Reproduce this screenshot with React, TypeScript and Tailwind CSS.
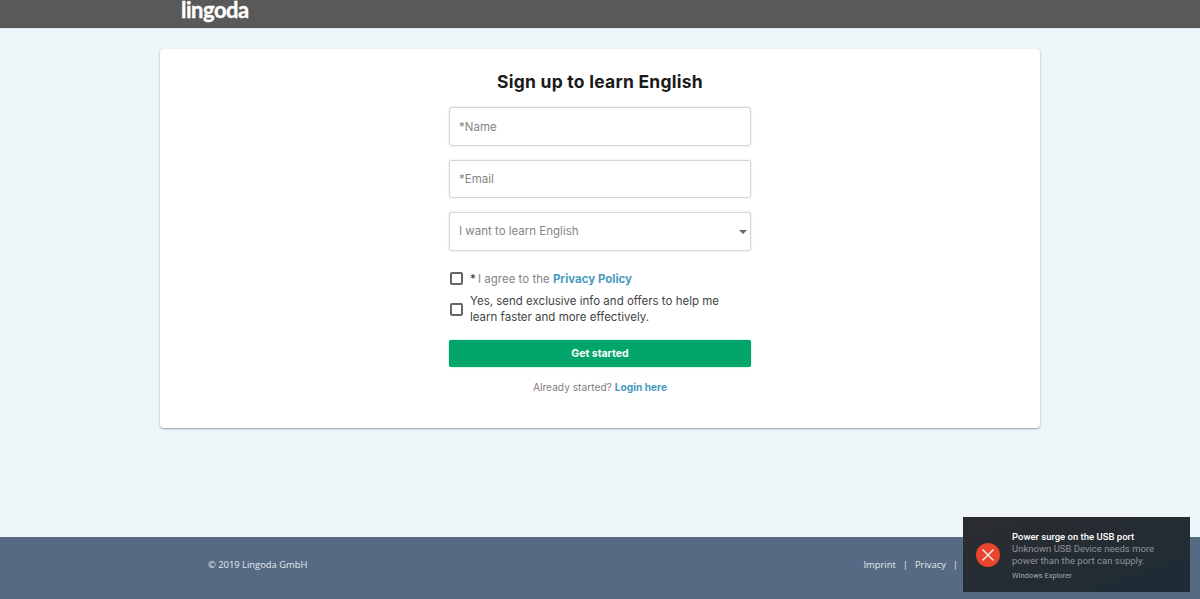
const sans = "font-['Inter','Liberation_Sans',sans-serif]";

const Field = ({ label, height }: { label: string; height: string }) => (
  <div className={`${height} w-full flex items-center px-[9px] bg-white border border-[#d3d6d8] rounded-[3px] shadow-[0_0_2px_#d8dadb] text-[11.5px] text-[#858585]`}>
    {label}
  </div>
);

const App = () => {
  return (
    <div className={`${sans} relative h-[599px] w-full overflow-hidden flex flex-col bg-[#eef6f9]`}>
      {/* Header */}
      <header className="h-[29px] shrink-0 bg-[#595959] border-b border-[#e2e6e8] pl-[181px]">
        <svg viewBox="0 0 72 28" className="w-[72px] h-[28px]">
          <text x="0" y="18" fill="#fff" stroke="#fff" strokeWidth="0.35" fontFamily="Lato, sans-serif" fontWeight="700" fontSize="22" letterSpacing="-0.5">lingoda</text>
        </svg>
      </header>

      {/* Card */}
      <main className="flex-1 flex justify-center pt-[20px]">
        <div className="w-[880px] h-[379px] bg-white rounded-[4px] shadow-[0_1px_2px_rgba(90,100,110,0.6)] flex flex-col items-center pt-[20px]">
          <h1 className="text-[17.5px] leading-[26px] font-bold text-[#1a1a1a] tracking-[0.25px]">Sign up to learn English</h1>
          <div className="w-[302px] mt-[12px] flex flex-col">
            <div className="flex flex-col gap-[14px]">
              <Field label="*Name" height="h-[39px] pt-[2px]" />
              <Field label="*Email" height="h-[38px] pt-[1px]" />
              <div className="relative">
                <Field label="I want to learn English" height="h-[39px]" />
                <svg viewBox="0 0 8 4" className="absolute right-[4px] top-[18px] w-[8px] h-[4px]">
                  <polygon points="0,0 8,0 4,4" fill="#666" />
                </svg>
              </div>
            </div>

            {/* Checkboxes */}
            <div className="mt-[20px] flex items-center gap-[7px] h-[16px] pl-px">
              <span className="w-[13px] h-[13px] shrink-0 border-2 border-[#666] rounded-[2px] -mt-[1px]" />
              <p className="text-[11.5px] text-[#858585] pt-[1px]">
                <span className="text-[#333] mr-[-1px]">*</span> I agree to the{" "}
                <a className="font-bold text-[#4a9ac0]">Privacy Policy</a>
              </p>
            </div>
            <div className="mt-[6px] flex items-center gap-[7px] pl-px">
              <span className="w-[13px] h-[13px] shrink-0 border-2 border-[#666] rounded-[2px]" />
              <p className="text-[11.5px] leading-[16px] text-[#444]">
                Yes, send exclusive info and offers to help me
                <br />
                learn faster and more effectively.
              </p>
            </div>

            <button className="mt-[15px] h-[27px] w-full rounded-[2px] bg-[#02a56a] shadow-[0_0_2px_#7fe0bd] text-white text-[10.5px] font-bold pt-[1px]">
              Get started
            </button>
            <p className="mt-[13px] text-center text-[10.2px] text-[#808080]">
              Already started? <a className="font-bold text-[#4a9ac0]">Login here</a>
            </p>
          </div>
        </div>
      </main>

      {/* Footer */}
      <footer className="h-[62px] shrink-0 bg-[#566b83] flex items-center justify-between pl-[208px] pr-[242px] pb-[6px] font-['Open_Sans',sans-serif] text-[9.4px] text-[#e4e9ee]">
        <span>© 2019 Lingoda GmbH</span>
        <div className="flex gap-[7px]">
          <span>Imprint</span>
          <span>|</span>
          <span>Privacy</span>
          <span>|</span>
        </div>
      </footer>

      {/* Windows toast */}
      <div className="absolute left-[963px] top-[517px] w-[227px] h-[75px] bg-gradient-to-br from-[#2b2c30] to-[#1d2c36] flex items-center pl-[13px] font-['Roboto',sans-serif]">
        <svg viewBox="0 0 24 24" className="w-[24px] h-[24px] shrink-0">
          <circle cx="12" cy="12" r="12" fill="#e8452c" />
          <path d="M6.5 6.5l11 11M17.5 6.5l-11 11" stroke="#f6e4df" strokeWidth="1.6" />
        </svg>
        <div className="ml-[12px] flex flex-col pt-[1px]">
          <span className="text-[9.5px] leading-[13px] font-medium text-white">Power surge on the USB port</span>
          <span className="text-[9.5px] leading-[12.5px] text-[#8f9499]">
            Unknown USB Device needs more
            <br />
            power than the port can supply.
          </span>
          <span className="mt-[2px] text-[7.5px] leading-[11px] text-[#a5a9ad]">Windows Explorer</span>
        </div>
      </div>
    </div>
  );
};

export default App;
